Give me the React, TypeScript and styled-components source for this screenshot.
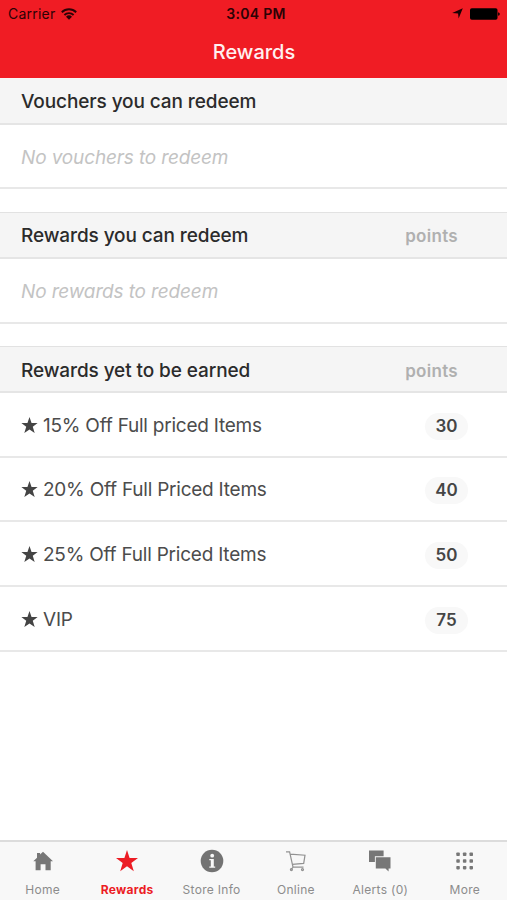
import React from "react";
import styled, { createGlobalStyle } from "styled-components";

const GlobalStyle = createGlobalStyle`
  * { box-sizing: border-box; }
  body { margin: 0; background: #fff; }
  h1, h2, p, ul { margin: 0; padding: 0; }
`;

const Screen = styled.div`
  display: flex;
  flex-direction: column;
  width: 507px;
  height: 900px;
  background: #fff;
  color: #4c4c4c;
  font-family: Inter, "Liberation Sans", sans-serif;
  white-space: nowrap;
  overflow: hidden;
`;

const TopBar = styled.header`
  height: 78px;
  flex: none;
  background: #f01c24;
`;

const StatusBar = styled.div`
  display: grid;
  grid-template-columns: 1fr auto 1fr;
  align-items: center;
  height: 27px;
  padding: 0 7px 0 8px;
  color: #2c0205;
`;

const Carrier = styled.div`
  display: flex;
  align-items: center;
  gap: 6px;
  font-size: 14px;
  letter-spacing: 0.22px;
`;

const Clock = styled.div`
  font-size: 14px;
  font-weight: 600;
  letter-spacing: 0.3px;
  padding-left: 4px;
`;

const DeviceState = styled.div`
  display: flex;
  align-items: center;
  justify-content: flex-end;
  gap: 7px;
`;

const Title = styled.h1`
  height: 51px;
  line-height: 50px;
  padding-left: 1px;
  color: #fff0f0;
  font-size: 20px;
  font-weight: 500;
  text-align: center;
`;

const Main = styled.main`
  flex: 1;
`;

const Section = styled.section`
  margin-bottom: 22.6px;
`;

const SectionHeader = styled.div<{ $first?: boolean }>`
  display: flex;
  align-items: center;
  justify-content: space-between;
  height: 46.8px;
  padding: ${(p) => (p.$first ? "1px" : "2px")} 49px 0 21px;
  background: #f5f5f5;
  border-top: ${(p) => (p.$first ? "1px solid #fbf5f5" : "1px solid #e2e2e2")};
  border-bottom: 2px solid #e5e5e5;
`;

const SectionTitle = styled.h2`
  color: #2b2b2b;
  font-size: 19px;
  font-weight: 500;
  letter-spacing: -0.1px;
`;

const PointsLabel = styled.span`
  padding-top: 1px;
  color: #b0b0b0;
  font-size: 17px;
  font-weight: 600;
  letter-spacing: 0.3px;
`;

const Row = styled.div`
  display: flex;
  align-items: center;
  height: 64.7px;
  padding: 2px 39px 0 21px;
  border-bottom: 2px solid #e8e8e8;
`;

const EmptyText = styled.p`
  color: #c3c3c3;
  font-size: 19px;
  font-style: italic;
  letter-spacing: -0.14px;
`;

const RewardName = styled.span`
  flex: 1;
  padding-left: 5px;
  font-size: 19px;
  letter-spacing: -0.23px;
`;

const Badge = styled.span`
  width: 43px;
  height: 27px;
  margin-top: 2px;
  border-radius: 14px;
  background: #f8f8f8;
  color: #454545;
  font-size: 17px;
  font-weight: 600;
  line-height: 27px;
  text-align: center;
`;

const TabBar = styled.nav`
  display: grid;
  grid-template-columns: repeat(6, 1fr);
  flex: none;
  height: 60px;
  padding-left: 0.500px;
  border-top: 2px solid #dcdcdc;
  background: #f8f8f8;
`;

const Tab = styled.div<{ $active?: boolean }>`
  display: flex;
  flex-direction: column;
  align-items: center;
  padding-top: 7px;
  color: ${(p) => (p.$active ? "#ec1c24" : "#8c8c8c")};
  font-size: 12px;
  font-weight: ${(p) => (p.$active ? 700 : 400)};
  letter-spacing: 0.3px;
`;

const TabIcon = styled.svg`
  width: 24px;
  height: 24px;
  margin-bottom: 9px;
  flex: none;
`;

const StarShape = ({ size, color }: { size: number; color: string }) => (
  <svg width={size} height={size} viewBox="0 0 24 24" fill={color}>
    <path d="M12 0l2.900 8.600H23.500l-6.900 5.300 2.700 8.800L12 17.500l-7.300 5.200 2.700-8.800L.5 8.600h8.600z" />
  </svg>
);

const rewards = [
  { name: "15% Off Full priced Items", points: 30 },
  { name: "20% Off Full Priced Items", points: 40 },
  { name: "25% Off Full Priced Items", points: 50 },
  { name: "VIP", points: 75 },
];

const tabs = [
  {
    label: "Home",
    icon: <path fill="#777" d="M12 2.700l10 9.600h-2.300v9h-5.200v-6h-4.900v6h-5v-9H2.300l3.700-3.600V4h3.100v1.600z" />,
  },
  {
    label: "Rewards",
    active: true,
    icon: <path fill="#ec1c24" d="M12 1l2.600 8H23l-6.700 5 2.500 8.300L12 17.200l-6.800 5.100L7.700 14 1 9h8.400z" />,
  },
  {
    label: "Store Info",
    icon: (
      <>
        <circle cx="12" cy="12" r="11.300" fill="#737373" />
        <circle cx="12.200" cy="6.700" r="1.900" fill="#f8f8f8" />
        <path fill="#f8f8f8" d="M9.300 10h4.500v7.400h1.400v1.300H9.300v-1.300h1.500v-6.100H9.300z" />
      </>
    ),
  },
  {
    label: "Online",
    icon: (
      <g fill="none" stroke="#929292" strokeWidth="1.200">
        <path d="M2 2.900h3.600L9 18.100h10.500M6.200 5.200l14.800 1-1.300 8.200-11.400 1M9.200 18.100l-2.200 2.300" />
        <circle cx="7.400" cy="20.600" r="1" />
        <circle cx="18.500" cy="20.600" r="1" />
      </g>
    ),
  },
  {
    label: "Alerts (0)",
    icon: (
      <g fill="#777">
        <path d="M1 1.600h14.600v5.600H6.900v5.700H1z" />
        <path d="M7.800 8.200h14.700v11.300h-1.900v2.900l-3.200-2.900H7.800z" />
      </g>
    ),
  },
  {
    label: "More",
    icon: (
      <g fill="#777">
        {[3.500, 10.200, 16.900].flatMap((y) =>
          [3.300, 9.900, 16.500].map((x) => <rect key={`${x}-${y}`} x={x} y={y} width="3.500" height="3.500" rx="0.800" />)
        )}
      </g>
    ),
  },
];

export default function App() {
  return (
    <Screen>
      <GlobalStyle />
      <TopBar>
        <StatusBar>
          <Carrier>
            Carrier
            <svg width="16" height="12" viewBox="0 0 16 12" fill="none" stroke="#2c0205" strokeWidth="1.900">
              <path d="M.8 4.200a10.300 10.300 0 0 1 14.400 0M3.400 7a6.600 6.600 0 0 1 9.200 0" />
              <path fill="#2c0205" stroke="none" d="M5 8.700a4.300 4.300 0 0 1 6 0L8 11.700z" />
            </svg>
          </Carrier>
          <Clock>3:04 PM</Clock>
          <DeviceState>
            <svg width="11" height="11" viewBox="0 0 11 11" fill="#190003">
              <path d="M10.800.2L6.600 10.500 6.100 5.400.2 5z" />
            </svg>
            <svg width="30" height="12" viewBox="0 0 30 12" fill="#000">
              <rect x="0" y="0.300" width="27.500" height="11.500" rx="1.800" />
              <path d="M28.100 4.200q1.700.4 1.700 1.800t-1.700 1.800z" />
            </svg>
          </DeviceState>
        </StatusBar>
        <Title>Rewards</Title>
      </TopBar>
      <Main>
        <Section>
          <SectionHeader $first>
            <SectionTitle>Vouchers you can redeem</SectionTitle>
          </SectionHeader>
          <Row>
            <EmptyText>No vouchers to redeem</EmptyText>
          </Row>
        </Section>
        <Section>
          <SectionHeader>
            <SectionTitle>Rewards you can redeem</SectionTitle>
            <PointsLabel>points</PointsLabel>
          </SectionHeader>
          <Row>
            <EmptyText>No rewards to redeem</EmptyText>
          </Row>
        </Section>
        <Section>
          <SectionHeader>
            <SectionTitle>Rewards yet to be earned</SectionTitle>
            <PointsLabel>points</PointsLabel>
          </SectionHeader>
          {rewards.map((r) => (
            <Row key={r.name}>
              <StarShape size={17} color="#444" />
              <RewardName>{r.name}</RewardName>
              <Badge>{r.points}</Badge>
            </Row>
          ))}
        </Section>
      </Main>
      <TabBar>
        {tabs.map((t) => (
          <Tab key={t.label} $active={t.active}>
            <TabIcon viewBox="0 0 24 24">{t.icon}</TabIcon>
            {t.label}
          </Tab>
        ))}
      </TabBar>
    </Screen>
  );
}
